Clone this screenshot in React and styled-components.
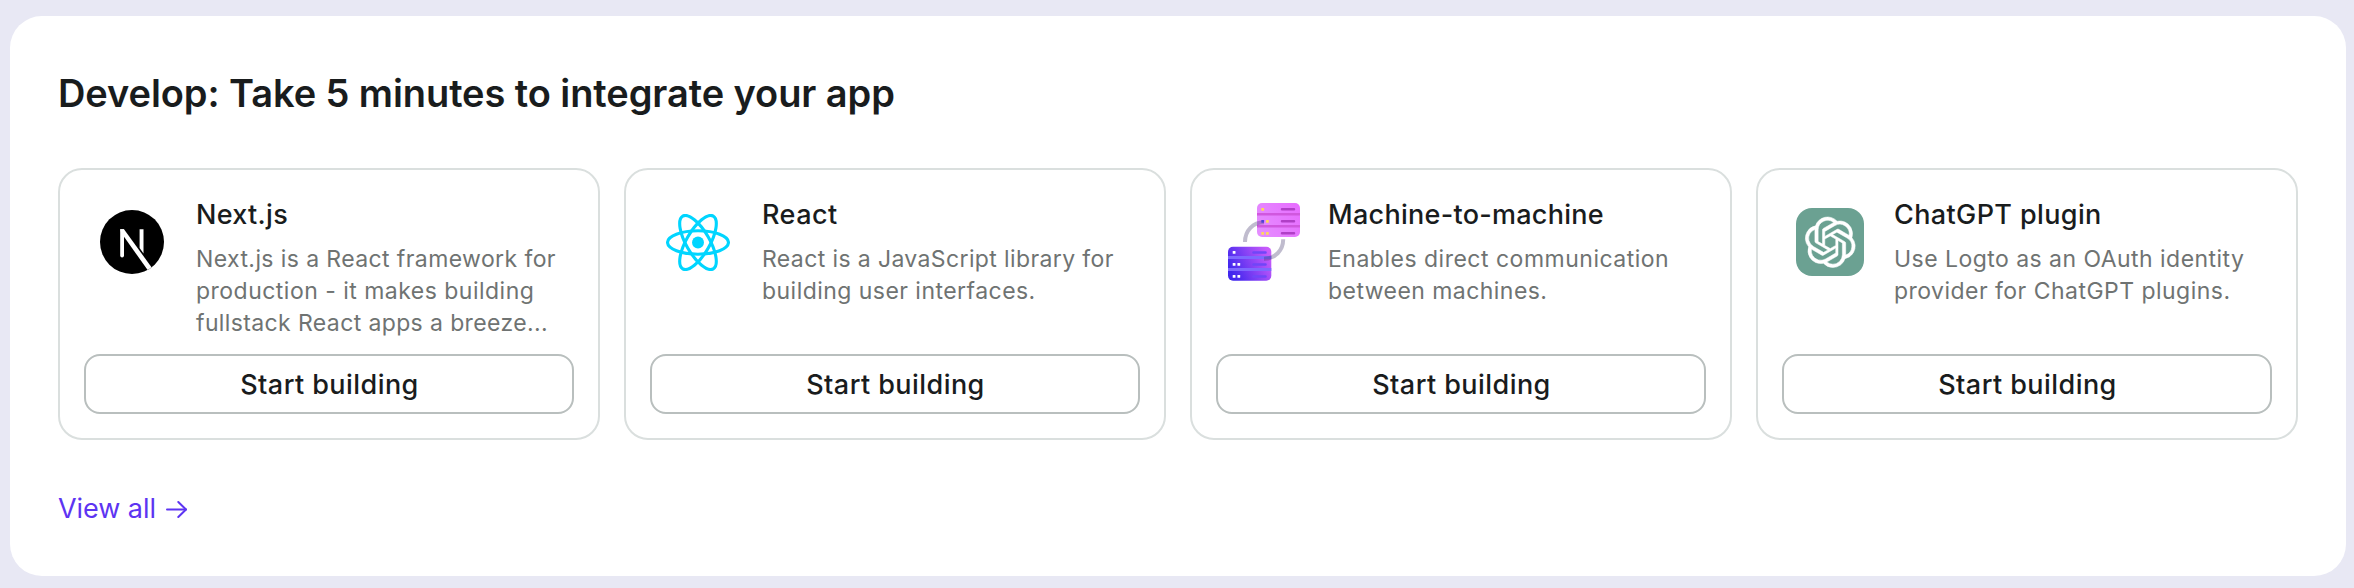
import React from "react";
import styled, { createGlobalStyle } from "styled-components";
import { SiOpenai } from "react-icons/si";

const GlobalStyle = createGlobalStyle`
  * {
    box-sizing: border-box;
  }
  body {
    margin: 0;
    background: #e8e8f4;
    color: #191c1d;
    font-family: Inter, "Liberation Sans", sans-serif;
    -webkit-font-smoothing: antialiased;
  }
`;

const Page = styled.main`
  height: 588px;
  padding: 16px 8px 12px 10px;
`;

const Panel = styled.section`
  display: flex;
  flex-direction: column;
  height: 560px;
  padding: 51px 48px 0;
  background: #fff;
  border-radius: 32px;
`;

const Heading = styled.h1`
  margin: 0 0 49px;
  font-size: 38px;
  font-weight: 600;
  line-height: 52px;
  letter-spacing: -0.085px;
`;

const CardGrid = styled.div`
  display: grid;
  grid-template-columns: repeat(4, 1fr);
  gap: 24px;
`;

const Card = styled.article`
  display: flex;
  flex-direction: column;
  height: 272px;
  padding: 24px;
  border: 2px solid #dadfde;
  border-radius: 24px;
`;

const CardHeader = styled.div`
  display: flex;
  gap: 16px;
  height: 160px;
`;

const IconBox = styled.div`
  display: flex;
  flex: none;
  align-items: center;
  justify-content: center;
  width: 96px;
  height: 96px;
`;

const CardText = styled.div`
  min-width: 0;
`;

const CardTitle = styled.h2`
  margin: 0 0 8px;
  font-size: 27px;
  font-weight: 500;
  line-height: 41px;
  letter-spacing: ${(p) => p.$tracking}px;
  white-space: nowrap;
`;

const DescriptionLine = styled.span`
  display: block;
  color: #6f7372;
  font-size: 23px;
  line-height: 32px;
  letter-spacing: ${(p) => p.$tracking}px;
  white-space: nowrap;
`;

const BuildButton = styled.button`
  display: flex;
  align-items: center;
  justify-content: center;
  width: 100%;
  height: 60px;
  padding: 1px 0 0 1px;
  border: 2px solid #b9bfbe;
  border-radius: 16px;
  background: transparent;
  color: #191c1d;
  font: 500 27px/36px Inter, "Liberation Sans", sans-serif;
  letter-spacing: 0.44px;
`;

const ViewAll = styled.a`
  display: flex;
  align-items: center;
  align-self: flex-start;
  gap: 10px;
  margin-top: 49px;
  color: #5d34f2;
  font-size: 27px;
  line-height: 40px;
  letter-spacing: -0.05px;
  text-decoration: none;
`;

const ChatTile = styled.div`
  display: flex;
  align-items: center;
  justify-content: center;
  width: 68px;
  height: 68px;
  border-radius: 16px;
  background: #6ba192;
  color: #fff;
`;

function NextIcon() {
  return (
    <svg width="64" height="64" viewBox="0 0 64 64">
      <defs>
        <clipPath id="next-disc">
          <circle cx="32" cy="32" r="32" />
        </clipPath>
      </defs>
      <circle cx="32" cy="32" r="32" fill="#000" />
      <g clipPath="url(#next-disc)" fill="#fff">
        <path d="M20.2 19.3H24V45.6a1.6 1.6 0 0 1-3.8 0Z" />
        <path d="M20.2 19.3H24L51.5 57.2 48 60.5 21 22.6Z" />
        <path d="M39.6 19.3H43.5V43.4L39.6 37.9Z" />
      </g>
    </svg>
  );
}

function ReactIcon() {
  return (
    <svg width="64" height="57" viewBox="-11.5 -10.23 23 20.46">
      <circle r="2.15" fill="#00d5ff" />
      <g fill="none" stroke="#00d5ff" strokeWidth="1.12">
        <ellipse rx="10.95" ry="4.2" />
        <ellipse rx="10.95" ry="4.2" transform="rotate(60)" />
        <ellipse rx="10.95" ry="4.2" transform="rotate(120)" />
      </g>
    </svg>
  );
}

function MachineIcon() {
  return (
    <svg width="72" height="78" viewBox="0 0 72 78">
      <defs>
        <linearGradient id="server-pink" x1="0" y1="0.7" x2="1" y2="0.3">
          <stop offset="0" stopColor="#e48dff" />
          <stop offset="1" stopColor="#e76eff" />
        </linearGradient>
        <linearGradient id="server-violet" x1="0" y1="0.7" x2="1" y2="0.3">
          <stop offset="0.05" stopColor="#4127ee" />
          <stop offset="1" stopColor="#c95bfb" />
        </linearGradient>
      </defs>
      <rect x="29" y="0" width="43" height="34" rx="5" fill="url(#server-pink)" />
      <path d="M29 11.3h43M29 23.3h43" stroke="#d058de" strokeWidth="2.4" />
      <path
        d="M54 6.3h12M54 18.3h12M54 30.3h12"
        stroke="#b03fc6"
        strokeWidth="2.5"
        strokeLinecap="round"
      />
      <g fill="#ffd65c">
        <rect x="33.3" y="5" width="2.8" height="2.8" rx="0.6" />
        <rect x="38" y="17" width="2.8" height="2.8" rx="0.6" />
        <rect x="33.3" y="29" width="2.8" height="2.8" rx="0.6" />
        <rect x="38" y="29" width="2.8" height="2.8" rx="0.6" />
      </g>
      <rect x="0" y="43.7" width="43.3" height="34" rx="5" fill="url(#server-violet)" />
      <path d="M0 54.5h43.3M0 66.5h43.3" stroke="#7d68ff" strokeWidth="2.8" />
      <path
        d="M25.5 49.5h12M25.5 61.5h12M25.5 73.5h12"
        stroke="#7046f8"
        strokeWidth="2.6"
        strokeLinecap="round"
      />
      <g fill="#fff">
        <rect x="4.7" y="48" width="2.8" height="2.8" rx="0.6" />
        <rect x="4.7" y="60" width="2.8" height="2.8" rx="0.6" />
        <rect x="9.4" y="60" width="2.8" height="2.8" rx="0.6" />
        <rect x="4.7" y="72" width="2.8" height="2.8" rx="0.6" />
        <rect x="9.4" y="72" width="2.8" height="2.8" rx="0.6" />
      </g>
      <g fill="none" stroke="#3c2f66" strokeOpacity="0.32" strokeWidth="4">
        <path d="M17 39C17 27.5 25 19.3 36 19.3" />
        <path d="M55.2 36.2C55.2 47.5 47 55.8 36 55.8" />
      </g>
      <rect x="33.3" y="17" width="2.8" height="2.8" rx="0.6" fill="#5140d8" />
    </svg>
  );
}

function ChatGptIcon() {
  return (
    <ChatTile>
      <SiOpenai size={50.5} stroke="currentColor" strokeWidth={0.25} overflow="visible" />
    </ChatTile>
  );
}

function ArrowIcon() {
  return (
    <svg width="22" height="18" viewBox="0 0 22 18" fill="none" stroke="currentColor" strokeWidth="2">
      <path d="M1 9.5H20" strokeLinecap="round" />
      <path d="M12.3 2 20 9.5 12.3 17" strokeLinecap="round" strokeLinejoin="round" />
    </svg>
  );
}

const guides = [
  {
    title: "Next.js",
    tracking: 0.3,
    Icon: NextIcon,
    lines: [
      ["Next.js is a React framework for", 0.4],
      ["production - it makes building", 0.48],
      ["fullstack React apps a breeze...", 0.38],
    ],
  },
  {
    title: "React",
    tracking: 0.45,
    Icon: ReactIcon,
    lines: [
      ["React is a JavaScript library for", 0.38],
      ["building user interfaces.", 0.46],
    ],
  },
  {
    title: "Machine-to-machine",
    tracking: 0.28,
    Icon: MachineIcon,
    lines: [
      ["Enables direct communication", 0.5],
      ["between machines.", 0.45],
    ],
  },
  {
    title: "ChatGPT plugin",
    tracking: 0.38,
    Icon: ChatGptIcon,
    lines: [
      ["Use Logto as an OAuth identity", 0.46],
      ["provider for ChatGPT plugins.", 0.47],
    ],
  },
];

export default function App() {
  return (
    <Page>
      <GlobalStyle />
      <Panel>
        <Heading>Develop: Take 5 minutes to integrate your app</Heading>
        <CardGrid>
          {guides.map(({ title, tracking, Icon, lines }) => (
            <Card key={title}>
              <CardHeader>
                <IconBox>
                  <Icon />
                </IconBox>
                <CardText>
                  <CardTitle $tracking={tracking}>{title}</CardTitle>
                  {lines.map(([text, spacing]) => (
                    <DescriptionLine key={text} $tracking={spacing}>
                      {text}
                    </DescriptionLine>
                  ))}
                </CardText>
              </CardHeader>
              <BuildButton type="button">Start building</BuildButton>
            </Card>
          ))}
        </CardGrid>
        <ViewAll href="#">
          View all
          <ArrowIcon />
        </ViewAll>
      </Panel>
    </Page>
  );
}
